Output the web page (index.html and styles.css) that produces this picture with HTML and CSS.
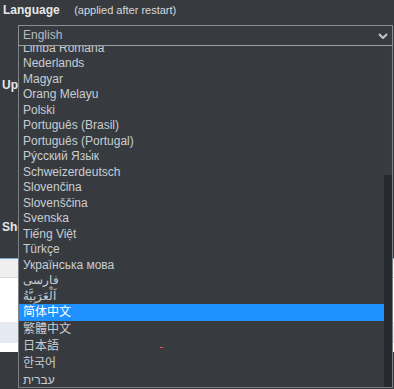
FILE: index.html
```html
<!DOCTYPE html>
<html lang="en">
<head>
    <meta charset="UTF-8">
    <meta name="viewport" content="width=device-width, initial-scale=1.0">
    <title>Settings</title>
    <link rel="stylesheet" href="styles.css">
</head>
<body>
    <div class="settings">
        <div class="title-row">
            <span class="title">Language</span>
            <span class="note">(applied after restart)</span>
        </div>
        <div class="select">
            <span class="select-value">English</span>
            <svg class="chevron" width="10" height="6" viewBox="0 0 10 6">
                <polyline points="1,1 5,5 9,1" fill="none" stroke="#c4c7cb" stroke-width="2"/>
            </svg>
            <div class="dropdown">
                <ul class="options">
                    <li>Limba Romana</li>
                    <li>Nederlands</li>
                    <li>Magyar</li>
                    <li>Orang Melayu</li>
                    <li>Polski</li>
                    <li>Português (Brasil)</li>
                    <li>Português (Portugal)</li>
                    <li>Рýсский Язы́к</li>
                    <li>Schweizerdeutsch</li>
                    <li>Slovenčina</li>
                    <li>Slovenščina</li>
                    <li>Svenska</li>
                    <li>Tiếng Việt</li>
                    <li>Türkçe</li>
                    <li>Українська мова</li>
                    <li>فارسی</li>
                    <li>اَلْعَرَبِيَّةُ</li>
                    <li class="cjk active">简体中文</li>
                    <li class="cjk">繁體中文</li>
                    <li class="cjk">日本語</li>
                    <li class="cjk">한국어</li>
                    <li class="cjk">עברית</li>
                </ul>
                <div class="scrollbar">
                    <div class="thumb"></div>
                </div>
                <span class="dot"></span>
            </div>
        </div>
        <div class="section section-updates">Updates</div>
        <div class="section section-show">Show</div>
        <div class="panel">
            <div class="panel-head"></div>
            <div class="panel-row"></div>
            <div class="panel-row selected"></div>
            <div class="panel-foot"></div>
        </div>
    </div>
</body>
</html>
```

FILE: styles.css
```css
body {
    margin: 0;
    background: #373b40;
    font-family: "Liberation Sans", Arial, "Noto Sans CJK SC", sans-serif;
    color: #c9cdd2;
    height: 389px;
    overflow: hidden;
}
.title-row {
    height: 25px;
    box-sizing: border-box;
    padding: 2px 3px;
    line-height: 14px;
}
.title {
    font-size: 12px;
    font-weight: bold;
    color: #e6e7e8;
    margin-right: 10px;
}
.note {
    font-size: 11px;
    color: #d8d9db;
}
.select {
    position: relative;
    margin: 0 1px 0 18px;
    height: 21px;
    box-sizing: border-box;
    border: 1px solid #8b8e92;
    border-bottom-color: #9c9fa3;
    display: flex;
    align-items: center;
    justify-content: space-between;
    padding: 0 4px;
    font-size: 12px;
}
.select-value {
    color: #b8bcc1;
    line-height: 19px;
}
.chevron {
    display: block;
}
.dropdown {
    position: absolute;
    top: calc(100% + 1px);
    left: -1px;
    right: -1px;
    height: 342px;
    box-sizing: border-box;
    border: 1px solid #7c8085;
    border-top: none;
    background: #373b40;
    display: flex;
    overflow: hidden;
    z-index: 2;
}
.options {
    flex: 1;
    list-style: none;
    margin: -5.25px 0 0 0;
    padding: 0;
}
.options li {
    height: 15.5px;
    line-height: 15.5px;
    padding-left: 4px;
    white-space: nowrap;
    font-size: 12px;
    color: #c9cdd2;
}
.options li.cjk {
    height: 17px;
    line-height: 17px;
}
.options li.active {
    background: #1e90ff;
    color: #ffffff;
}
.scrollbar {
    width: 8px;
    background: #26292d;
}
.thumb {
    height: 129px;
    background: #383c41;
}
.dot {
    position: absolute;
    left: 141px;
    top: 301px;
    width: 3px;
    height: 1px;
    background: #e8505b;
}
.section {
    padding-left: 2px;
    font-size: 12px;
    font-weight: bold;
    line-height: 14px;
    color: #e6e7e8;
}
.section-updates {
    margin-top: 32px;
}
.section-show {
    margin-top: 128px;
}
.panel {
    margin-top: 24px;
    border-top: 1px solid #79a6d4;
}
.panel-head {
    height: 18px;
    background: #efefef;
    border-bottom: 1px solid #d9d9d9;
}
.panel-row {
    height: 44px;
    background: #ffffff;
}
.panel-row.selected {
    height: 21px;
    background: #e5eaf2;
}
.panel-foot {
    height: 9px;
    background: #ffffff;
}
```
